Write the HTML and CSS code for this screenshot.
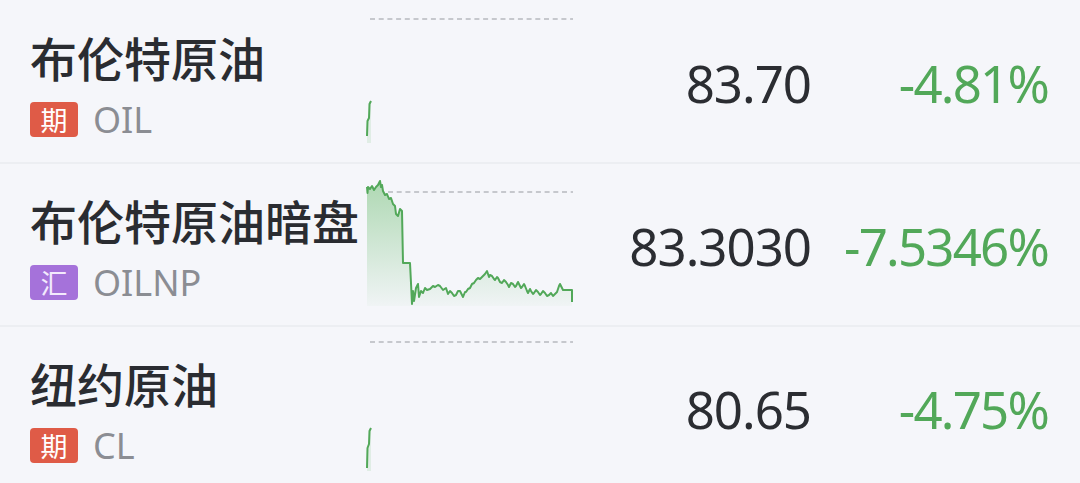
FILE: index.html
```html
<!DOCTYPE html>
<html lang="zh-CN">
<head>
  <meta charset="UTF-8" />
  <meta name="viewport" content="width=device-width, initial-scale=1.0" />
  <title>原油行情</title>
  <link rel="stylesheet" href="styles.css">
</head>
<body>
  <div class="quote-list">

    <div class="quote-row">
      <div class="quote-info">
        <div class="quote-name">布伦特原油</div>
        <div class="quote-code">
          <span class="tag tag-futures">期</span>
          <span class="code-text">OIL</span>
        </div>
      </div>
      <svg class="spark" viewBox="0 0 208 130" width="208" height="130">
        <line class="prev-close" x1="3" y1="4" x2="206" y2="4" />
        <polygon class="spark-fill" points="0,121 0.5,106 2,103 2.5,89 4,86 4,128 0,128" />
        <polyline class="spark-line" points="0,121 0.5,106 2,103 2.5,89 4,86" />
      </svg>
      <div class="quote-price">83.70</div>
      <div class="quote-change">-4.81%</div>
    </div>

    <div class="quote-row">
      <div class="quote-info">
        <div class="quote-name">布伦特原油暗盘</div>
        <div class="quote-code">
          <span class="tag tag-fx">汇</span>
          <span class="code-text">OILNP</span>
        </div>
      </div>
      <svg class="spark" viewBox="0 0 208 130" width="208" height="130">
        <defs>
          <linearGradient id="fillGreen" x1="0" y1="0" x2="0" y2="1">
            <stop offset="0" stop-color="#4caf50" stop-opacity="0.42" />
            <stop offset="1" stop-color="#4caf50" stop-opacity="0.03" />
          </linearGradient>
        </defs>
        <line class="prev-close" x1="21" y1="14" x2="206" y2="14" />
        <polygon fill="url(#fillGreen)" points="0,9 0.5,15 1,9 3,11 5,8 7,12 9,9 11,7 13,3 14,9 15,7 16,13 18,17 20,16 22,21 24,20 26,26 28,28 29,36 31,38 33,31 35,33 36,85 43,85 44,105 45,126 46,113 47,123 49,110 51,106 52,119 54,113 56,115 58,110 60,112 63,111 66,108 68,109 71,107 73,108 76,112 79,110 81,116 83,113 85,115 87,118 89,117 91,113 93,113 95,117 96,119 98,114 99,114 101,111 103,110 105,106 107,105 109,102 111,100 113,101 115,99 117,97 118,96 120,93 122,99 123,97 125,98 127,101 128,102 130,99 131,100 133,104 135,105 137,102 139,104 141,107 142,109 144,105 146,106 148,109 149,108 151,104 152,106 154,110 155,109 157,106 158,108 160,113 161,115 163,111 164,113 166,116 167,115 169,112 171,114 173,117 174,116 176,113 178,115 180,118 182,117 184,115 186,118 188,116 190,114 192,108 193,106 195,110 196,112 205,112 205,124 205,128 0,128" />
        <polyline class="spark-line" points="0,9 0.5,15 1,9 3,11 5,8 7,12 9,9 11,7 13,3 14,9 15,7 16,13 18,17 20,16 22,21 24,20 26,26 28,28 29,36 31,38 33,31 35,33 36,85 43,85 44,105 45,126 46,113 47,123 49,110 51,106 52,119 54,113 56,115 58,110 60,112 63,111 66,108 68,109 71,107 73,108 76,112 79,110 81,116 83,113 85,115 87,118 89,117 91,113 93,113 95,117 96,119 98,114 99,114 101,111 103,110 105,106 107,105 109,102 111,100 113,101 115,99 117,97 118,96 120,93 122,99 123,97 125,98 127,101 128,102 130,99 131,100 133,104 135,105 137,102 139,104 141,107 142,109 144,105 146,106 148,109 149,108 151,104 152,106 154,110 155,109 157,106 158,108 160,113 161,115 163,111 164,113 166,116 167,115 169,112 171,114 173,117 174,116 176,113 178,115 180,118 182,117 184,115 186,118 188,116 190,114 192,108 193,106 195,110 196,112 205,112 205,124" />
      </svg>
      <div class="quote-price">83.3030</div>
      <div class="quote-change">-7.5346%</div>
    </div>

    <div class="quote-row">
      <div class="quote-info">
        <div class="quote-name">纽约原油</div>
        <div class="quote-code">
          <span class="tag tag-futures">期</span>
          <span class="code-text">CL</span>
        </div>
      </div>
      <svg class="spark" viewBox="0 0 208 130" width="208" height="130">
        <line class="prev-close" x1="3" y1="1" x2="206" y2="1" />
        <polygon class="spark-fill" points="0,127 0.5,107 2,103 2.5,90 4,87 4,130 0,130" />
        <polyline class="spark-line" points="0,127 0.5,107 2,103 2.5,90 4,87" />
      </svg>
      <div class="quote-price">80.65</div>
      <div class="quote-change">-4.75%</div>
    </div>

  </div>
</body>
</html>
```

FILE: styles.css
```css
* {
  box-sizing: border-box;
  margin: 0;
  padding: 0;
}

html, body {
  width: 100%;
  height: 100%;
  background-color: #f5f6fa;
  font-family: 'Noto Sans', 'Noto Sans CJK SC', sans-serif;
  overflow: hidden;
}

.quote-list {
  display: flex;
  flex-direction: column;
  margin-top: 1px;
}

.quote-row {
  display: grid;
  grid-template-columns: 337px 208px 1fr 239px;
  height: 163px;
  padding: 0 30px;
  border-bottom: 2px solid #eceef2;
}

.quote-info {
  padding-top: 28px;
}

.quote-name {
  font-family: 'Noto Sans CJK SC', sans-serif;
  font-size: 47px;
  font-weight: 500;
  line-height: 56px;
  color: #2a2c31;
  white-space: nowrap;
}

.quote-code {
  display: flex;
  align-items: center;
  height: 35px;
  margin-top: 17px;
}

.tag {
  display: flex;
  align-items: center;
  justify-content: center;
  width: 48px;
  height: 35px;
  border-radius: 4px;
  font-family: 'Noto Sans CJK SC', sans-serif;
  font-size: 27px;
  color: #fff;
}

.tag-futures {
  background-color: #df5b47;
}

.tag-fx {
  background-color: #a572da;
  color: #f3eafd;
}

.code-text {
  margin-left: 15px;
  font-size: 36px;
  color: #8b8d93;
}

.spark {
  display: block;
  margin-top: 14px;
  overflow: visible;
}

.prev-close {
  stroke: #b7b9bf;
  stroke-width: 1.6;
  stroke-dasharray: 5 3.7;
}

.spark-line {
  fill: none;
  stroke: #52a859;
  stroke-width: 2;
  stroke-linejoin: round;
}

.spark-fill {
  fill: rgba(76, 175, 80, 0.12);
}

.quote-price,
.quote-change {
  align-self: center;
  padding-top: 4px;
  font-size: 51px;
  line-height: 1;
  text-align: right;
  white-space: nowrap;
  letter-spacing: -1px;
}

.quote-price {
  color: #2b2d32;
}

.quote-change {
  color: #52a859;
  letter-spacing: -1.8px;
  padding-right: 2px;
}
```
